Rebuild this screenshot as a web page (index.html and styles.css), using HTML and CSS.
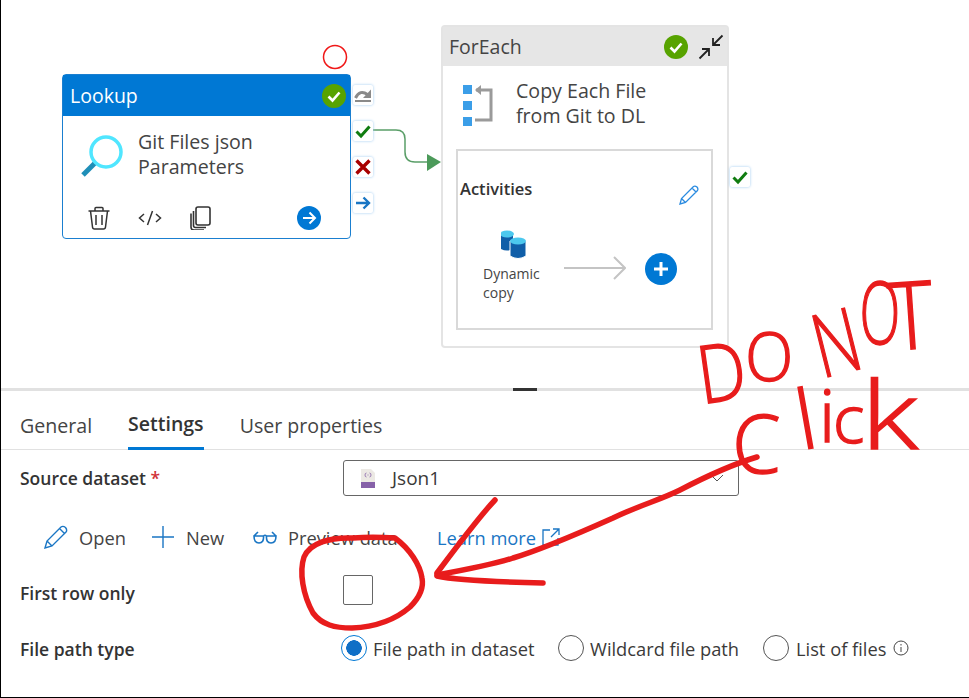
FILE: index.html
```html
<!DOCTYPE html>
<html lang="en">
<head>
    <meta charset="UTF-8">
    <meta name="viewport" content="width=device-width, initial-scale=1.0">
    <title>Pipeline Settings</title>
    <link rel="stylesheet" href="styles.css">
</head>
<body>
    <div class="frame">
        <section class="canvas">
            <svg class="wires" width="969" height="388" viewBox="0 0 969 388">
                <circle cx="335" cy="57" r="11.5" fill="none" stroke="#f01818" stroke-width="1.5"/>
                <path d="M372 130H396Q405 130 405 139V152Q405 162 415 162H428" fill="none" stroke="#5a9e68" stroke-width="1.5"/>
                <path d="M427 154L441 162L427 171Z" fill="#4c9a5a"/>
            </svg>

            <div class="node node-lookup">
                <div class="node-head">
                    <span class="node-title">Lookup</span>
                    <svg class="status" viewBox="0 0 24 24"><circle cx="12" cy="12" r="12" fill="#57a300"/><path d="M6.5 12.5L10.5 16.5L17.5 8.5" fill="none" stroke="#fff" stroke-width="2.6"/></svg>
                </div>
                <div class="node-body">
                    <svg class="node-icon" width="44" height="46" viewBox="0 0 44 46">
                        <path d="M15 29L3 41" stroke="#1f8fb8" stroke-width="5"/>
                        <circle cx="26" cy="18" r="15" fill="#fff" stroke="#50e6ff" stroke-width="3.5"/>
                    </svg>
                    <span class="node-name">Git Files json<br>Parameters</span>
                </div>
                <div class="node-foot">
                    <svg class="tool" viewBox="0 0 24 24" fill="none" stroke="#333" stroke-width="1.5"><path d="M1.5 5H22.5M8 5V2.5Q8 1.5 9 1.5H15Q16 1.5 16 2.5V5M3.5 5L5.5 21Q5.7 23 7.5 23H16.5Q18.3 23 18.5 21L20.5 5M9 9V19M15 9V19"/></svg>
                    <svg class="tool" viewBox="0 0 24 24" fill="none" stroke="#333" stroke-width="1.5"><path d="M6 8L1.5 12L6 16M18 8L22.5 12L18 16M14.5 5L9.5 19"/></svg>
                    <svg class="tool" viewBox="0 0 24 24" fill="none" stroke="#333" stroke-width="1.6"><rect x="7" y="1" width="14" height="18" rx="2"/><path d="M4.5 5V19.5Q4.5 21.5 6.5 21.5H17M2 7.5V21Q2 24 5 24H15"/></svg>
                    <svg class="go" viewBox="0 0 24 24"><circle cx="12" cy="12" r="12" fill="#0078d4"/><path d="M6 12H17M12.5 6.5L18 12L12.5 17.5" fill="none" stroke="#fff" stroke-width="2"/></svg>
                </div>
            </div>

            <div class="port port-skip"><svg viewBox="0 0 18 18"><path d="M1.500 12Q6 3 13.500 8.500" fill="none" stroke="#8a8a8a" stroke-width="3"/><path d="M17 3.500V12H9Z" fill="#8a8a8a"/><path d="M1 15H17" stroke="#8a8a8a" stroke-width="2"/></svg></div>
            <div class="port port-ok"><svg viewBox="0 0 18 18"><path d="M2.5 9.5L7 14L15.5 4.5" fill="none" stroke="#107c10" stroke-width="3"/></svg></div>
            <div class="port port-fail"><svg viewBox="0 0 18 18"><path d="M2.500 2.500L15.500 15.500M15.500 2.500L2.500 15.500" fill="none" stroke="#a80000" stroke-width="3.400"/></svg></div>
            <div class="port port-done"><svg viewBox="0 0 18 18"><path d="M2 9H15M9.5 3.5L15 9L9.5 14.5" fill="none" stroke="#1a76c4" stroke-width="2.4"/></svg></div>

            <div class="node node-foreach">
                <div class="node-head">
                    <span class="node-title">ForEach</span>
                    <svg class="status" viewBox="0 0 24 24"><circle cx="12" cy="12" r="12" fill="#57a300"/><path d="M6.5 12.5L10.5 16.5L17.5 8.5" fill="none" stroke="#fff" stroke-width="2.6"/></svg>
                    <svg class="collapse" viewBox="0 0 26 26" fill="none" stroke="#222" stroke-width="1.8"><path d="M24.500 1.500L15 11M15 4V11H22M1.500 24.500L11 15M4 15H11V22"/></svg>
                </div>
                <div class="node-body">
                    <svg class="node-icon" width="32" height="42" viewBox="0 0 32 42">
                        <rect x="0" y="0" width="9" height="9" fill="#3b9ee8"/>
                        <rect x="0" y="16" width="9" height="9" fill="#3b9ee8"/>
                        <rect x="0" y="32" width="9" height="9" fill="#3b9ee8"/>
                        <path d="M13 5H28V35H12" fill="none" stroke="#9a9a9a" stroke-width="3"/>
                        <path d="M18 0L12 5L18 10Z" fill="#9a9a9a"/>
                    </svg>
                    <span class="node-name">Copy Each File<br>from Git to DL</span>
                </div>
                <div class="activities">
                    <div class="activities-head">
                        <span>Activities</span>
                        <svg class="edit" viewBox="0 0 20 20" fill="none" stroke="#2a8be0" stroke-width="1.300"><path d="M1 19L2.500 13.500L14.500 1.500Q16 0.500 18 2Q19.500 4 18.500 5.500L6.500 17.500ZM2.500 13.500L6.500 17.500M13 3L17 7"/></svg>
                    </div>
                    <div class="activities-row">
                        <div class="activity">
                            <svg width="26" height="30" viewBox="0 0 26 30">
                                <path d="M0 4V19Q6 22 12 19V4Z" fill="#0f5ea8"/>
                                <ellipse cx="6" cy="4" rx="7" ry="3.500" fill="#4cc8ee"/>
                                <path d="M9 11V26Q17 31 25 26V11Z" fill="#0f5ea8" stroke="#fff"/>
                                <ellipse cx="17" cy="11" rx="8" ry="3.500" fill="#4cc8ee"/>
                            </svg>
                            <span>Dynamic<br>copy</span>
                        </div>
                        <svg class="flow" width="62" height="26" viewBox="0 0 62 26" fill="none" stroke="#c4c4c4" stroke-width="2"><path d="M0 13H61M50 2L61 13L50 24"/></svg>
                        <svg class="add" viewBox="0 0 32 32"><circle cx="16" cy="16" r="16" fill="#0078d4"/><path d="M16 9V23M9 16H23" stroke="#fff" stroke-width="3"/></svg>
                    </div>
                </div>
            </div>
            <div class="port port-after"><svg viewBox="0 0 18 18"><path d="M2.500 9.500L7 14L15.500 4.500" fill="none" stroke="#107c10" stroke-width="3"/></svg></div>
        </section>

        <div class="splitter"><span class="grip"></span></div>

        <section class="panel">
            <nav class="tabs">
                <a class="tab">General</a>
                <a class="tab tab-active">Settings</a>
                <a class="tab">User properties</a>
            </nav>

            <div class="field field-source">
                <label class="field-label">Source dataset <span class="req">*</span></label>
                <div class="select">
                    <svg class="json-icon" width="14" height="19" viewBox="0 0 14 19">
                        <path d="M0 0H10L14 4V13H0Z" fill="#ece9e4"/>
                        <rect y="13" width="14" height="6" fill="#8661a8"/>
                        <path d="M5.500 4Q4 4 4 6Q4 8 5.500 8M8.500 4Q10 4 10 6Q10 8 8.500 8M7 5.500V6.500" fill="none" stroke="#8661a8" stroke-width=".8"/>
                    </svg>
                    <span class="select-value">Json1</span>
                    <svg class="chevron" width="14" height="8" viewBox="0 0 14 8" fill="none" stroke="#555"><path d="M1 1L7 7L13 1"/></svg>
                </div>
            </div>

            <div class="actions">
                <a class="action action-open">
                    <svg width="24" height="24" viewBox="0 0 24 24" fill="none" stroke="#1a76c4" stroke-width="1.400"><path d="M1 23L3 16L17 2Q19 0.500 21.500 2.500Q23.500 5 22 7L8 21ZM3 16L8 21M15.500 3.500L20.500 8.500"/></svg>
                    Open
                </a>
                <a class="action action-new">
                    <svg width="24" height="24" viewBox="0 0 24 24" fill="none" stroke="#1a76c4" stroke-width="1.400"><path d="M12 1V23M1 12H23"/></svg>
                    New
                </a>
                <a class="action action-preview">
                    <svg width="24" height="14" viewBox="0 0 24 14" fill="none" stroke="#1a76c4" stroke-width="1.600"><path d="M1 6H10.500Q11 13 6 13Q1 13 1 6ZM13.500 6H23Q23 13 18 13Q13 13 13.500 6ZM10.500 6Q12 4.500 13.500 6M1 6L5 2M23 6L19 2"/></svg>
                    Preview data
                </a>
                <a class="learn">Learn more
                    <svg width="18" height="18" viewBox="0 0 18 18" fill="none" stroke="#1a76c4" stroke-width="1.300"><path d="M8 2H1V17H16V10M9 9L17 1M11 1H17V7"/></svg>
                </a>
            </div>

            <div class="field field-first">
                <label class="field-label">First row only</label>
                <span class="checkbox"></span>
            </div>

            <div class="field field-path">
                <label class="field-label">File path type</label>
                <div class="radios">
                    <span class="radio radio-on"></span><span class="radio-text radio-text-a">File path in dataset</span>
                    <span class="radio"></span><span class="radio-text radio-text-b">Wildcard file path</span>
                    <span class="radio"></span><span class="radio-text radio-text-c">List of files</span>
                    <svg class="info" width="16" height="16" viewBox="0 0 16 16" fill="none" stroke="#444"><circle cx="8" cy="8" r="7"/><path d="M8 7V12M8 4V5.500"/></svg>
                </div>
            </div>
        </section>

        <svg class="ink" width="969" height="698" viewBox="0 0 969 698" fill="none" stroke="#e81c1c" stroke-width="5.500" stroke-linecap="round" stroke-linejoin="round">
            <path d="M353 538C330 537 310 543 304 557C299 572 303 595 313 613C322 625 335 628 352 628C375 627 395 620 410 607C420 597 424 588 422 578C420 565 410 549 395 538C380 537 365 537 353 538Z"/>
            <path d="M437 575C470 569 495 564 513 558C540 550 575 535 613 518C640 505 660 500 680 490C705 477 730 465 757 457"/>
            <path d="M495 500C478 518 458 545 437 573"/>
            <path d="M437 576C455 580 500 582 543 583"/>
        </svg>
        <div class="scrawl">
            <span class="ink-d">D</span><span class="ink-o1">O</span>
            <span class="ink-n">N</span><span class="ink-o2">O</span><span class="ink-t">T</span>
            <span class="ink-c">C</span><span class="ink-l">l</span><span class="ink-i">i</span><span class="ink-c2">c</span><span class="ink-k">k</span>
        </div>
    </div>
</body>
</html>
```

FILE: styles.css
```css
* {
    box-sizing: border-box;
}
body {
    margin: 0;
    background-color: #fff;
    font-family: "Open Sans", "Noto Sans", sans-serif;
    color: #3b3a39;
    overflow: hidden;
}
.frame {
    position: relative;
    width: 969px;
    height: 698px;
    border-left: 1px solid #000;
    border-bottom: 1px solid #000;
    overflow: hidden;
}

/* pipeline canvas */
.canvas {
    position: relative;
    height: 388px;
}
.wires {
    position: absolute;
    left: -1px;
    top: 0;
}
.node {
    position: absolute;
    display: flex;
    flex-direction: column;
    background-color: #fff;
    border-radius: 4px;
}
.node-lookup {
    left: 61px;
    top: 74px;
    width: 289px;
    height: 165px;
    border: 1.500px solid #1a7fd0;
}
.node-foreach {
    left: 440px;
    top: 25px;
    width: 288px;
    height: 323px;
    border: 2px solid #e4e4e4;
}
.node-head {
    display: flex;
    align-items: center;
    flex-shrink: 0;
}
.node-lookup .node-head {
    height: 41px;
    padding: 0 4px 0 7px;
    background-color: #0078d4;
    color: #fff;
}
.node-foreach .node-head {
    height: 39px;
    padding: 0 3px 0 6px;
    background-color: #e6e6e6;
    color: #444;
}
.node-title {
    flex: 1;
    font-size: 19.500px;
}
.status {
    width: 24px;
    height: 24px;
}
.collapse {
    width: 26px;
    height: 26px;
    margin-left: 10px;
}
.node-body {
    display: flex;
    align-items: center;
}
.node-icon {
    margin-top: 6px;
}
.node-lookup .node-body {
    padding: 12px 0 0 17px;
    gap: 14px;
}
.node-foreach .node-body {
    padding: 12px 0 0 20px;
    gap: 21px;
}
.node-name {
    font-size: 19.600px;
    line-height: 25px;
    color: #444;
}
.node-foot {
    display: flex;
    align-items: center;
    margin-top: auto;
    padding: 0 29px 8px 24px;
    gap: 27px;
}
.tool {
    width: 24px;
    height: 24px;
}
.go {
    width: 24px;
    height: 24px;
    margin-left: auto;
}
.port {
    position: absolute;
    display: flex;
    align-items: center;
    justify-content: center;
    width: 20px;
    height: 20px;
    background-color: #fff;
    box-shadow: 0 0 3px #9cc8f0;
    border-radius: 2px;
}
.port svg {
    width: 18px;
    height: 18px;
}
.port-skip {
    left: 352px;
    top: 85px;
}
.port-ok {
    left: 352px;
    top: 121px;
}
.port-fail {
    left: 352px;
    top: 157px;
}
.port-done {
    left: 352px;
    top: 193px;
}
.port-after {
    left: 729px;
    top: 167px;
}

/* inner activities box */
.activities {
    margin: 21px 14px 0 13px;
    height: 181px;
    border: 2px solid #d9d9d9;
    padding: 0 2px;
}
.activities-head {
    display: flex;
    align-items: flex-start;
    justify-content: space-between;
    height: 28px;
    margin-top: 26px;
    padding-right: 10px;
    font-size: 16.500px;
    font-weight: 600;
    color: #333;
}
.edit {
    width: 20px;
    height: 20px;
    margin-top: 8px;
}
.activities-row {
    display: flex;
    align-items: flex-start;
    margin-top: 25px;
    padding-left: 23px;
}
.activity {
    display: flex;
    flex-direction: column;
    font-size: 14px;
    line-height: 19px;
    color: #444;
    width: 81px;
}
.activity svg {
    margin-left: 18px;
    margin-bottom: 4px;
}
.flow {
    margin-top: 25px;
}
.add {
    width: 32px;
    height: 32px;
    margin-top: 23px;
    margin-left: 19px;
}

/* divider between canvas and panel */
.splitter {
    height: 3px;
    background-color: #e1e1e1;
}
.grip {
    display: block;
    width: 24px;
    height: 3px;
    margin-left: 512px;
    background-color: #333;
}

/* settings panel */
.panel {
    padding-left: 19px;
    font-size: 18.300px;
}
.tabs {
    display: flex;
    gap: 36px;
    height: 59px;
    margin-left: -19px;
    padding-left: 19px;
    border-bottom: 1px solid #e1e1e1;
    font-size: 19.600px;
}
.tab {
    display: flex;
    align-items: center;
    height: 59px;
    padding-top: 9px;
    color: #444;
}
.tab-active {
    font-weight: 600;
    font-size: 19.500px;
    color: #333;
    border-bottom: 3px solid #0078d4;
}
.field {
    display: grid;
    grid-template-columns: 323px 1fr;
    align-items: center;
}
.field-label {
    font-weight: 600;
    font-size: 17.500px;
    color: #333;
}
.req {
    color: #d13438;
}
.field-source {
    margin-top: 10px;
}
.select {
    display: flex;
    align-items: center;
    width: 396px;
    height: 36px;
    padding: 0 14px 0 17px;
    border: 1px solid #666;
    border-radius: 3px;
    font-size: 19px;
}
.select-value {
    flex: 1;
    margin-left: 17px;
}
.actions {
    display: flex;
    align-items: center;
    height: 48px;
    margin-top: 17px;
    padding-left: 24px;
    color: #444;
}
.action {
    display: flex;
    align-items: center;
    gap: 11px;
}
.action-open {
    width: 107px;
}
.action-new {
    width: 102px;
}
.action-preview {
    width: 184px;
}
.learn {
    display: flex;
    align-items: center;
    gap: 6px;
    color: #1a76c4;
}
.field-first {
    margin-top: 14px;
}
.field-first .field-label {
    padding-top: 6px;
}
.checkbox {
    display: block;
    width: 30px;
    height: 30px;
    border: 1px solid #666;
    border-radius: 2px;
}
.field-path {
    margin-top: 30px;
}
.field-path .field-label {
    padding-top: 2px;
}
.radios {
    display: flex;
    align-items: center;
    margin-left: -2px;
}
.radio {
    width: 26px;
    height: 26px;
    border: 1px solid #555;
    border-radius: 50%;
    flex-shrink: 0;
}
.radio-on {
    border: 1.500px solid #0078d4;
    background: radial-gradient(circle, #0f6fc6 0, #0f6fc6 7.500px, #fff 8px);
}
.radio-text {
    margin-left: 6px;
}
.radio-text-a {
    width: 185px;
}
.radio-text-b {
    width: 173px;
}
.radio-text-c {
    margin-left: 7px;
    margin-right: 7px;
}

/* red marker scribbles on top of the screenshot */
.ink {
    position: absolute;
    left: -1px;
    top: 0;
    pointer-events: none;
}
.scrawl {
    font-weight: 300;
    color: #e81c1c;
    -webkit-text-stroke: 1.500px #e81c1c;
}
.scrawl span {
    position: absolute;
    line-height: 1;
}
.ink-d {
    left: 692px;
    top: 330px;
    font-size: 80px;
    transform: rotate(-8deg) scaleX(.85);
}
.ink-o1 {
    left: 743px;
    top: 322px;
    font-size: 66px;
    transform: scaleX(.95);
}
.ink-n {
    left: 803px;
    top: 296px;
    font-size: 88px;
    transform: rotate(-14deg) scaleX(.72);
}
.ink-o2 {
    left: 846px;
    top: 268px;
    font-size: 86px;
    transform: scaleX(.62);
}
.ink-t {
    left: 885px;
    top: 266px;
    font-size: 94px;
    transform: rotate(-4deg) scaleX(.9);
}
.ink-c {
    left: 730px;
    top: 400px;
    font-size: 82px;
    transform: scaleX(.95);
}
.ink-l {
    left: 795px;
    top: 376px;
    font-size: 82px;
    transform: rotate(-10deg);
}
.ink-i {
    left: 818px;
    top: 378px;
    font-size: 72px;
}
.ink-c2 {
    left: 832px;
    top: 384px;
    font-size: 66px;
}
.ink-k {
    left: 866px;
    top: 366px;
    font-size: 94px;
    transform: scaleX(1.25);
}
```
